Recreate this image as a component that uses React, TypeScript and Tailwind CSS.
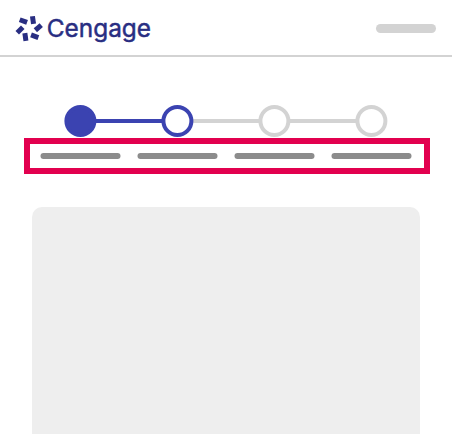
const steps = ["complete", "current", "upcoming", "upcoming"] as const;

const circleStyles = {
  complete: "border-[#3b43b1] bg-[#3b43b1]",
  current: "border-[#3b43b1] bg-white",
  upcoming: "border-[#d3d3d3] bg-white",
};

const logoBlocks = [
  { x: 23.4, y: 21.1, r: 110 },
  { x: 33, y: 20.1, r: -8 },
  { x: 38.3, y: 27.7, r: 49 },
  { x: 34.7, y: 36.3, r: 110 },
  { x: 25.4, y: 37, r: -8 },
  { x: 20, y: 30, r: 45 },
];

function Logo() {
  return (
    <div className="flex items-center">
      <svg width="32" height="56" viewBox="14 0 32 56" className="shrink-0" aria-hidden="true">
        {logoBlocks.map((b) => (
          <rect
            key={`${b.x}-${b.y}`}
            x={b.x - 2.5}
            y={b.y - 3.9}
            width="5"
            height="7.8"
            fill="#292e82"
            transform={`rotate(${b.r} ${b.x} ${b.y})`}
          />
        ))}
      </svg>
      <svg width="108" height="56" viewBox="46 0 108 56" className="shrink-0">
        <text
          x="46.8"
          y="36.8"
          textLength="104.2"
          lengthAdjust="spacingAndGlyphs"
          fill="#292e82"
          stroke="#292e82"
          strokeWidth="0.45"
          className="font-['Inter',sans-serif] text-[24.3px]"
        >
          Cengage
        </text>
      </svg>
    </div>
  );
}

export default function App() {
  return (
    <div className="flex h-[434px] w-[452px] flex-col overflow-hidden bg-white">
      <header className="flex h-[57px] shrink-0 items-center justify-between border-b-2 border-[#d3d3d3] pl-[14px] pr-4">
        <Logo />
        <div className="mt-[2px] h-[9px] w-[60px] rounded-full bg-[#d3d3d3]" />
      </header>

      <div className="mt-12 flex h-8 shrink-0 translate-x-[0.4px] items-center pl-16">
        {steps.map((step, i) => (
          <div key={i} className="flex items-center">
            {i > 0 && (
              <div className={`-mx-px h-1 w-[67px] ${i === 1 ? "bg-[#3b43b1]" : "bg-[#d3d3d3]"}`} />
            )}
            <div className={`z-10 size-8 rounded-full border-4 ${circleStyles[step]}`} />
          </div>
        ))}
      </div>

      <div className="ml-6 mt-px flex h-9 w-[406px] shrink-0 items-center gap-[17px] border-[6px] border-[#e2004f] pl-[10px]">
        {steps.map((_, i) => (
          <div key={i} className="h-1.5 w-20 shrink-0 translate-x-[0.5px] rounded-full bg-[#8c8c8c]" />
        ))}
      </div>

      <main className="mx-8 mt-[33px] grow rounded-t-[10px] bg-[#eeeeee]" />
    </div>
  );
}
